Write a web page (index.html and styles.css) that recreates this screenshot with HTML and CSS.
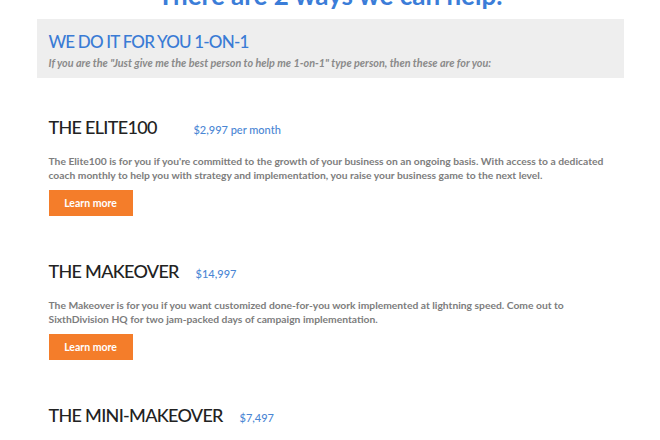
FILE: index.html
```html
<!DOCTYPE html>
<html>
<head>
  <title>Coaching - 2 ways we can help</title>
  <link rel="stylesheet" href="styles.css">
</head>
<body>
  <h1 class="page-title">There are 2 ways we can help.</h1>

  <div class="wrap">
    <div class="intro">
      <h2>WE DO IT FOR YOU 1-ON-1</h2>
      <p>If you are the "Just give me the best person to help me 1-on-1" type person, then these are for you:</p>
    </div>

    <div class="offer">
      <h3>THE ELITE100 <span class="price wide">$2,997 per month</span></h3>
      <p>The Elite100 is for you if you're committed to the growth of your business on an ongoing basis. With access to a dedicated coach monthly to help you with strategy and implementation, you raise your business game to the next level.</p>
      <a class="btn" href="#">Learn more</a>
    </div>

    <div class="offer">
      <h3>THE MAKEOVER <span class="price">$14,997</span></h3>
      <p>The Makeover is for you if you want customized done-for-you work implemented at lightning speed. Come out to SixthDivision HQ for two jam-packed days of campaign implementation.</p>
      <a class="btn" href="#">Learn more</a>
    </div>

    <div class="offer">
      <h3>THE MINI-MAKEOVER <span class="price">$7,497</span></h3>
      <p>The Mini-Makeover is for you if you want a focused day of done-for-you implementation on a single campaign.</p>
      <a class="btn" href="#">Learn more</a>
    </div>
  </div>
</body>
</html>
```

FILE: styles.css
```css
body {
  font-family: Lato, "Open Sans", sans-serif;
  margin: 0;
  background-color: #fff;
  color: #222;
}
.page-title {
  margin: -24px 0 0;
  font-size: 26px;
  line-height: 38px;
  font-weight: 700;
  color: #3b7dd8;
  text-align: center;
}
.wrap {
  width: 587px;
  margin: 5px auto 0;
}
.intro {
  background-color: #eeeeee;
  padding: 12px 12px 8px;
}
.intro h2 {
  margin: 0;
  font-size: 17px;
  line-height: 22px;
  font-weight: 500;
  letter-spacing: -0.8px;
  color: #3a7bd5;
}
.intro p {
  margin: 3px 0 0;
  font-size: 10.8px;
  line-height: 14px;
  font-weight: 700;
  font-style: italic;
  color: #8a8a8a;
}
.offer {
  padding: 0 12px;
  margin-top: 37px;
  height: 107px;
}
.offer h3 {
  margin: 0;
  font-size: 18px;
  line-height: 24px;
  font-weight: 500;
  letter-spacing: -0.7px;
  color: #222;
}
.price {
  margin-left: 13px;
  font-size: 11px;
  font-weight: 500;
  letter-spacing: 0;
  color: #4a86d4;
}
.price.wide {
  margin-left: 33px;
}
.offer p {
  margin: 12px 0 8px;
  font-size: 10.3px;
  line-height: 14px;
  font-weight: 700;
  color: #7d7d7d;
}
.btn {
  display: inline-block;
  width: 84px;
  height: 26px;
  line-height: 26px;
  text-align: center;
  background-color: #f47d2a;
  color: #fff;
  font-size: 10.5px;
  font-weight: 700;
  text-decoration: none;
}
```
